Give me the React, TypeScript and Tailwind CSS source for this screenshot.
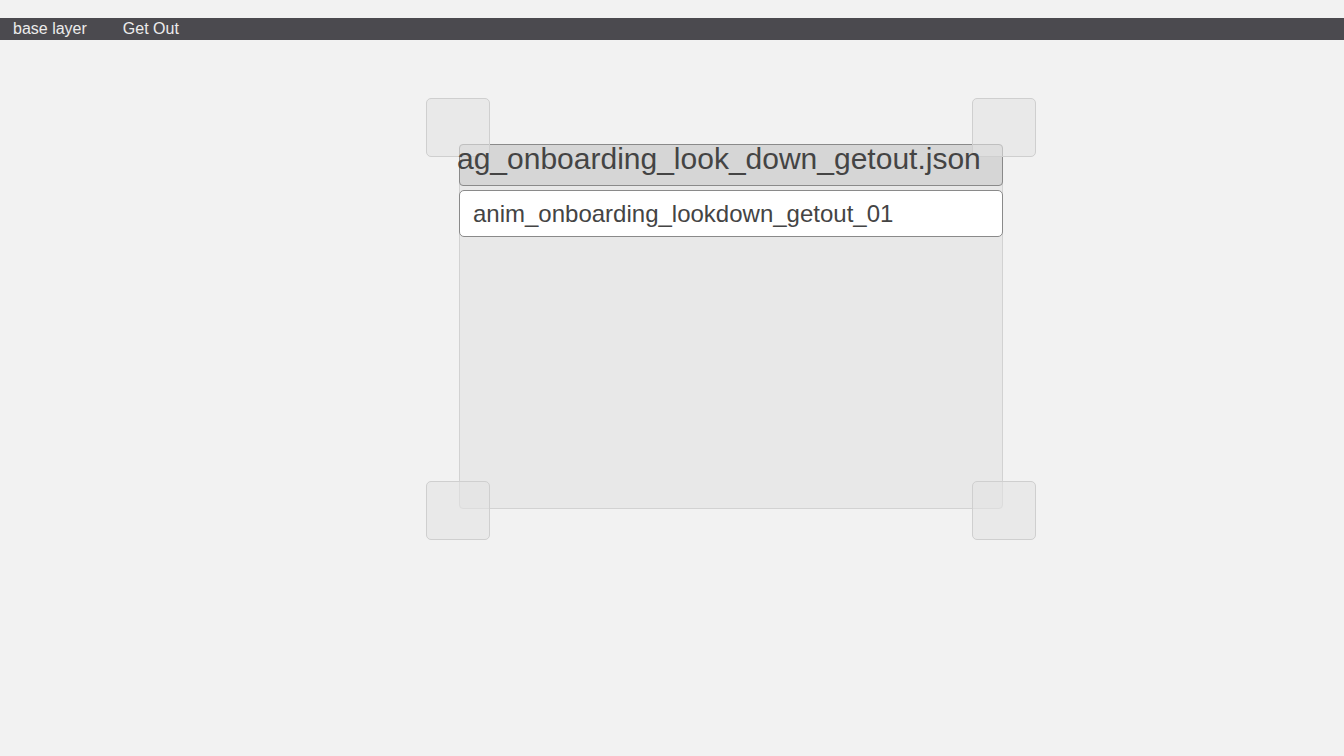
export default function App() {
  const font = { fontFamily: '"Liberation Sans", Arial, sans-serif' };
  const corner = "absolute h-[59px] w-[64px] rounded-[5px] border border-[#cfcfcf] bg-[#e3e3e3]/60";
  return (
    <div className="min-h-[756px] w-full bg-[#f2f2f2] pt-[18px]" style={font}>
      <div className="flex h-[22px] items-center bg-[#4b4a4f] text-[16px] text-[#ececec]">
        <span className="ml-[13px]">base layer</span>
        <span className="ml-[36px]">Get Out</span>
      </div>
      <div className="relative ml-[459px] mt-[104px] h-[365px] w-[544px]">
        <div className="flex h-full flex-col gap-[4px] rounded-[4px] border border-[#d2d2d2] bg-[#e8e8e8]">
          <div className="-mx-px -mt-px h-[42px] whitespace-nowrap rounded-[4px] border border-[#8a8a8a] bg-[#d6d6d6] text-[30px] leading-[28px] text-[#444]">
            <span className="relative z-10 -ml-[3px]">ag_onboarding_look_down_getout.json</span>
          </div>
          <div className="-mx-px flex h-[47px] items-center rounded-[5px] border border-[#8a8a8a] bg-white pl-[13px] text-[24px] text-[#444]">
            anim_onboarding_lookdown_getout_01
          </div>
        </div>
        <div className={`${corner} -left-[33px] -top-[46px]`} />
        <div className={`${corner} -right-[33px] -top-[46px]`} />
        <div className={`${corner} -bottom-[31px] -left-[33px]`} />
        <div className={`${corner} -bottom-[31px] -right-[33px]`} />
      </div>
    </div>
  );
}
